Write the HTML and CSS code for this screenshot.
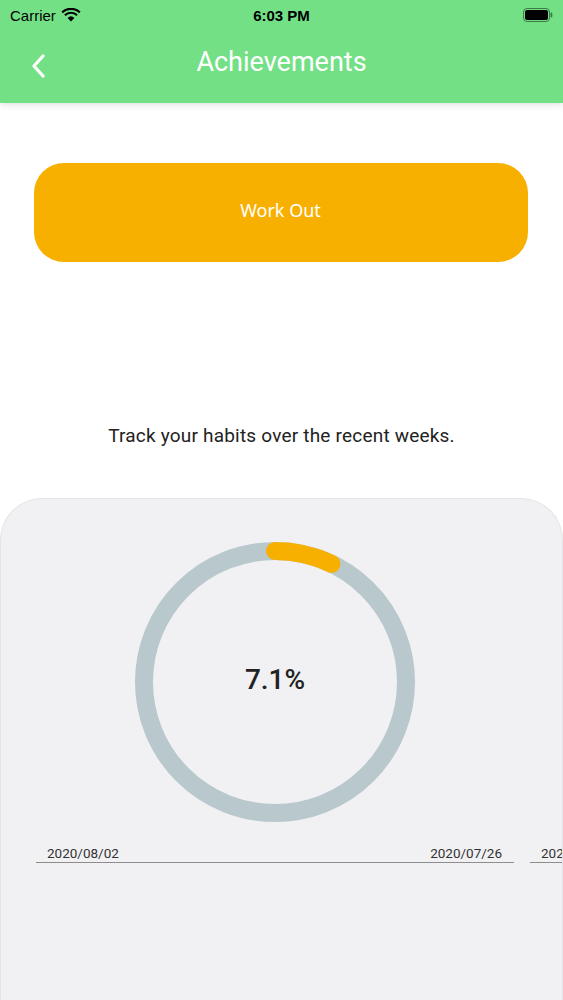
FILE: index.html
```html
<!DOCTYPE html>
<html lang="en">
<head>
  <meta charset="UTF-8">
  <meta name="viewport" content="width=device-width, initial-scale=1.0">
  <title>Achievements</title>
  <link rel="stylesheet" href="styles.css">
</head>
<body>
  <header class="topbar">
    <div class="status">
      <div class="status-left">
        <span>Carrier</span>
        <svg class="wifi" viewBox="0 0 20 14" width="20" height="14">
          <path d="M10 13.5 L6.6 9.9 A5 5 0 0 1 13.4 9.9 Z" fill="#000"/>
          <path d="M3.9 7.2 A8.8 8.8 0 0 1 16.1 7.2" fill="none" stroke="#000" stroke-width="2.2"/>
          <path d="M1.2 4.4 A12.6 12.6 0 0 1 18.8 4.4" fill="none" stroke="#000" stroke-width="2.2"/>
        </svg>
      </div>
      <div class="status-time">6:03 PM</div>
      <div class="status-right">
        <svg viewBox="0 0 30 14" width="30" height="14">
          <rect x="0.5" y="0.5" width="26" height="13" rx="3.5" fill="none" stroke="#3b7a47" stroke-width="1"/>
          <rect x="2" y="2" width="23" height="10" rx="2" fill="#000"/>
          <rect x="27.5" y="4.5" width="1.8" height="5" rx="0.9" fill="#3b7a47"/>
        </svg>
      </div>
    </div>
    <div class="navbar">
      <svg class="back" viewBox="0 0 14 24" width="14" height="24">
        <path d="M12 2 L3 12 L12 22" fill="none" stroke="#fff" stroke-width="3.2" stroke-linecap="round" stroke-linejoin="round"/>
      </svg>
      <h1>Achievements</h1>
    </div>
  </header>

  <main>
    <button class="habit-btn" type="button">Work Out</button>

    <p class="hint">Track your habits over the recent weeks.</p>

    <section class="card">
      <div class="ring">
        <svg viewBox="0 0 300 300" width="300" height="300">
          <circle cx="150" cy="150" r="131" fill="none" stroke="#b8c8cc" stroke-width="18"/>
          <circle cx="150" cy="150" r="131" fill="none" stroke="#f8b000" stroke-width="18"
                  stroke-linecap="round" stroke-dasharray="58.4 1000" transform="rotate(-90 150 150)"/>
        </svg>
        <div class="ring-label">7.1%</div>
      </div>

      <div class="weeks">
        <div class="week">
          <span>2020/08/02</span>
          <span>2020/07/26</span>
        </div>
        <div class="week">
          <span>2020/07/26</span>
          <span>2020/07/19</span>
        </div>
      </div>
    </section>
  </main>
</body>
</html>
```

FILE: styles.css
```css
html, body {
  margin: 0;
  padding: 0;
}
body {
  font-family: Roboto, 'Noto Sans', sans-serif;
  background: #ffffff;
  width: 563px;
  height: 1000px;
  overflow: hidden;
  color: #222;
}
.topbar {
  background: #73e086;
  height: 103px;
  box-shadow: 0 2px 6px rgba(0,0,0,0.12);
  position: relative;
  z-index: 2;
}
.status {
  height: 30px;
  display: flex;
  align-items: center;
  justify-content: space-between;
  padding: 0 10px;
  font-family: 'Liberation Sans', Arial, sans-serif;
  font-size: 15px;
  color: #000;
}
.status-left {
  display: flex;
  align-items: center;
  gap: 5px;
  width: 120px;
}
.status-time {
  font-weight: bold;
}
.status-right {
  width: 120px;
  display: flex;
  justify-content: flex-end;
}
.navbar {
  height: 65px;
  display: flex;
  align-items: center;
  justify-content: center;
  position: relative;
}
.back {
  position: absolute;
  left: 31px;
  top: 24px;
}
.navbar h1 {
  margin: 0;
  color: #fff;
  font-size: 27px;
  font-weight: 400;
  padding-bottom: 2px;
}
main {
  display: flex;
  flex-direction: column;
  align-items: center;
}
.habit-btn {
  margin-top: 60px;
  width: 494px;
  height: 99px;
  border: none;
  border-radius: 30px;
  background: #f8b000;
  color: #fff;
  font-family: 'Noto Sans', sans-serif;
  font-size: 18px;
  padding: 0 0 6px 0;
  margin-left: -2px;
}
.hint {
  margin: 162px 0 0 0;
  font-size: 19px;
  color: #222;
  letter-spacing: 0.2px;
}
.card {
  margin-top: 51px;
  width: 561px;
  height: 520px;
  background: #f1f1f3;
  border: 1px solid #e4e4e8;
  border-bottom: none;
  border-radius: 42px 42px 0 0;
  overflow: hidden;
}
.ring {
  position: relative;
  width: 300px;
  height: 300px;
  margin: 33px 0 0 124px;
}
.ring svg {
  display: block;
}
.ring-label {
  position: absolute;
  inset: 0;
  display: flex;
  align-items: center;
  justify-content: center;
  font-size: 28px;
  font-weight: 500;
  color: #222;
  padding-bottom: 6px;
}
.weeks {
  display: flex;
  gap: 16px;
  margin: 13px 0 0 35px;
}
.week {
  flex: 0 0 478px;
  display: flex;
  justify-content: space-between;
  padding: 0 12px 1px 11px;
  box-sizing: border-box;
  border-bottom: 1.5px solid #8d8d8d;
  font-size: 13.5px;
  color: #333;
}
```
